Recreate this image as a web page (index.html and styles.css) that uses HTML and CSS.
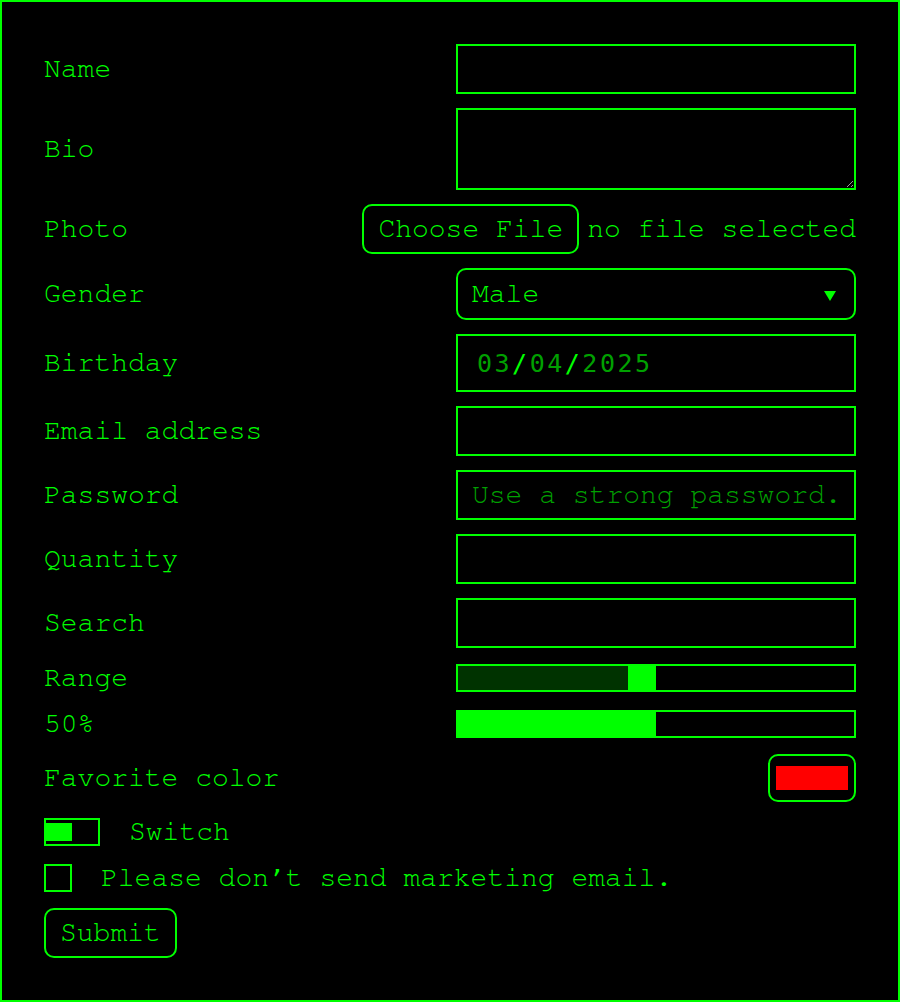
FILE: index.html
```html
<!DOCTYPE html>
<html lang="en">
<head>
<meta charset="utf-8">
<title>Form</title>
<link rel="stylesheet" href="styles.css">
</head>
<body>
<form class="form">
  <label class="lbl" for="name">Name</label>
  <input class="field" id="name" type="text">

  <label class="lbl" for="bio">Bio</label>
  <textarea class="field area" id="bio"></textarea>

  <label class="lbl">Photo</label>
  <div class="file"><span class="btn">Choose File</span><span class="file-name">no file selected</span></div>

  <label class="lbl">Gender</label>
  <div class="field select"><span>Male</span><svg class="caret" width="12" height="10" viewBox="0 0 12 10"><path d="M0 0H12L6 10Z" fill="#00ff00"/></svg></div>

  <label class="lbl">Birthday</label>
  <div class="field date"><span class="dg">03</span><span class="sl">/</span><span class="dg">04</span><span class="sl">/</span><span class="dg">2025</span></div>

  <label class="lbl" for="email">Email address</label>
  <input class="field" id="email" type="text">

  <label class="lbl" for="pw">Password</label>
  <input class="field" id="pw" type="text" placeholder="Use a strong password.">

  <label class="lbl" for="qty">Quantity</label>
  <input class="field" id="qty" type="text">

  <label class="lbl" for="search">Search</label>
  <input class="field" id="search" type="text">

  <label class="lbl">Range</label>
  <div class="range"><div class="range-fill" style="width:170px"></div><div class="thumb"></div></div>

  <label class="lbl">50%</label>
  <div class="progress"><div class="bar" style="width:200px"></div></div>

  <label class="lbl">Favorite color</label>
  <div class="color"><div class="swatch"></div></div>

  <div class="check-row"><span class="switch"><span class="knob"></span></span><span>Switch</span></div>
  <div class="check-row"><span class="box"></span><span>Please don’t send marketing email.</span></div>

  <button class="btn submit" type="button">Submit</button>
</form>
</body>
</html>
```
FILE: styles.css
```css
html, body {
  margin: 0;
  background: #000;
}
body {
  font-family: "Nimbus Mono PS", "FreeMono", "Courier", "Courier New", "Liberation Mono", monospace;
  font-size: 28px;
  color: #00ff00;
}
.form {
  display: grid;
  grid-template-columns: 1fr auto;
  row-gap: 14px;
  align-items: center;
  border: 2px solid #00ff00;
  padding: 42px;
}
.lbl {
  line-height: 24px;
}
.field {
  box-sizing: border-box;
  width: 400px;
  height: 50px;
  margin: 0;
  padding: 0 14px;
  border: 2px solid #00ff00;
  border-radius: 0;
  background: #000;
  color: #00ff00;
  font: inherit;
  outline: none;
  appearance: none;
  justify-self: end;
}
.field::placeholder {
  color: #00a000;
  opacity: 1;
}
.area {
  height: 82px;
  display: block;
  color-scheme: dark;
}
.file {
  display: flex;
  align-items: center;
  gap: 8px;
  justify-self: end;
}
.btn {
  box-sizing: border-box;
  height: 50px;
  padding: 0 14px;
  border: 2px solid #00ff00;
  border-radius: 10px;
  background: #000;
  color: #00ff00;
  font: inherit;
  display: flex;
  align-items: center;
}
.select {
  height: 52px;
  border-radius: 10px;
  display: flex;
  align-items: center;
  justify-content: space-between;
  padding: 0 18px 0 14px;
}
.caret {
  display: block;
  margin-top: 3px;
}
.date {
  height: 58px;
  display: flex;
  align-items: center;
  padding-left: 19px;
  font-family: "DejaVu Sans Mono", monospace;
  font-size: 25px;
  letter-spacing: 2.5px;
}
.dg {
  color: #00a000;
}
.sl {
  color: #00ff00;
}
.range {
  box-sizing: border-box;
  width: 400px;
  height: 28px;
  margin: 2px 0;
  border: 2px solid #00ff00;
  display: flex;
  justify-self: end;
}
.range-fill {
  background: #003300;
}
.thumb {
  width: 28px;
  background: #00ff00;
}
.progress {
  box-sizing: border-box;
  width: 400px;
  height: 28px;
  margin: 2px 0;
  border: 2px solid #00ff00;
  display: flex;
  justify-self: end;
}
.bar {
  background: #00ff00;
  margin: -2px 0 -2px -2px;
}
.color {
  box-sizing: border-box;
  width: 88px;
  height: 48px;
  padding: 10px 6px;
  border: 2px solid #00ff00;
  border-radius: 10px;
  justify-self: end;
}
.swatch {
  height: 24px;
  background: #ff0000;
}
.check-row {
  grid-column: 1 / -1;
  display: flex;
  align-items: center;
  gap: 29px;
  margin: 2px 0;
  line-height: 24px;
}
.switch {
  box-sizing: border-box;
  width: 56px;
  height: 28px;
  border: 2px solid #00ff00;
  display: flex;
  align-items: center;
}
.knob {
  width: 26px;
  height: 18px;
  background: #00ff00;
}
.box {
  box-sizing: border-box;
  width: 28px;
  height: 28px;
  border: 2px solid #00ff00;
}
.submit {
  grid-column: 1 / -1;
  justify-self: start;
  margin: 0;
}
```
